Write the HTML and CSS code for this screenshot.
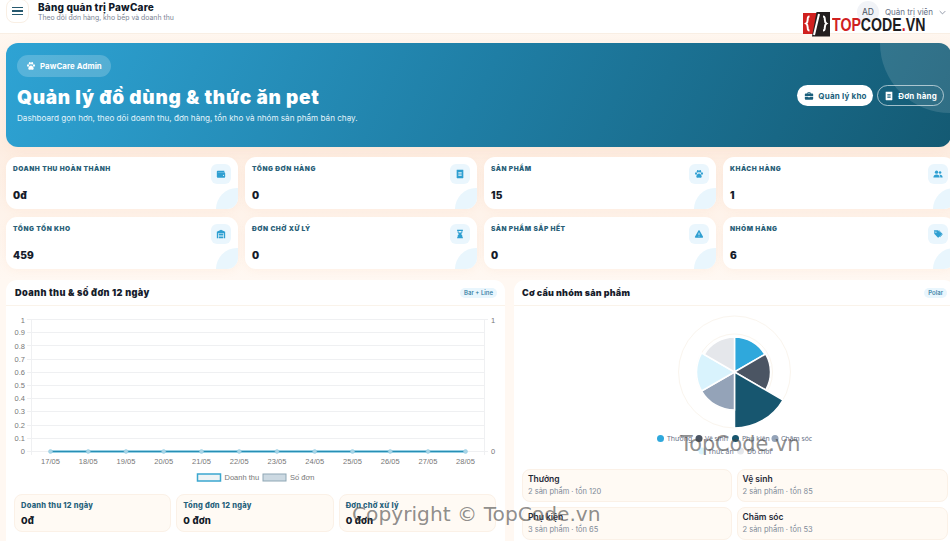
FILE: index.html
```html
<!DOCTYPE html>
<html lang="vi">
<head>
<meta charset="utf-8">
<title>PawCare</title>
<link rel="stylesheet" href="styles.css">
</head>
<body>
<svg class="defs" width="0" height="0" aria-hidden="true">
  <symbol id="i-paw" viewBox="0 0 24 24"><ellipse cx="5" cy="11" rx="2.4" ry="3"/><ellipse cx="9.3" cy="5.5" rx="2.5" ry="3.3"/><ellipse cx="14.7" cy="5.5" rx="2.5" ry="3.3"/><ellipse cx="19" cy="11" rx="2.4" ry="3"/><path d="M12 11c-3 0-6.500 4-6.500 7 0 2 1.500 3 3 3 1.300 0 2.300-.8 3.500-.8s2.200.8 3.500.8c1.500 0 3-1 3-3 0-3-3.500-7-6.500-7z"/></symbol>
  <symbol id="i-brief" viewBox="0 0 24 24"><path d="M8 6V4.500C8 3.700 8.700 3 9.500 3h5c.8 0 1.500.7 1.500 1.500V6h4c1.100 0 2 .9 2 2v4H2V8c0-1.100.9-2 2-2h4zm2 0h4V5h-4v1zM2 13.500h8V15h4v-1.500h8V19c0 1.100-.9 2-2 2H4c-1.100 0-2-.9-2-2v-5.500z"/></symbol>
  <symbol id="i-receipt" viewBox="0 0 24 24"><path fill-rule="evenodd" d="M5 2h14c.6 0 1 .4 1 1v18c0 .6-.4 1-1 1H5c-.6 0-1-.4-1-1V3c0-.6.400-1 1-1zm3 5v2h8V7H8zm0 4v2h8v-2H8zm0 4v2h8v-2H8z"/></symbol>
  <symbol id="i-wallet" viewBox="0 0 24 24"><path fill-rule="evenodd" d="M4 4h15c.6 0 1 .4 1 1v2H4.500c-.4 0-.5.500 0 .5H20c1.100 0 2 .9 2 2V19c0 1.100-.9 2-2 2H4c-1.100 0-2-.9-2-2V6c0-1.100.9-2 2-2zm14 9.500a1.500 1.500 0 100 3 1.500 1.500 0 000-3z"/></symbol>
  <symbol id="i-users" viewBox="0 0 24 24"><circle cx="8.500" cy="7.500" r="4"/><circle cx="17" cy="8.500" r="3"/><path d="M1 20c0-4.500 3-7 7.500-7s7.500 2.500 7.500 7v.5H1V20zM17.500 20.500V20c0-2.500-.9-4.600-2.500-6 .7-.3 1.400-.5 2.300-.5 3.500 0 5.700 2.200 5.700 6v1h-5.500z"/></symbol>
  <symbol id="i-store" viewBox="0 0 24 24"><path fill-rule="evenodd" d="M12 2l10 4.500V22h-3V10H5v12H2V6.500L12 2zM6.500 11.500h11v3h-11v-3zm0 4h11v2.500h-11v-2.500zm0 3.500h11v3h-11v-3z"/></symbol>
  <symbol id="i-hour" viewBox="0 0 24 24"><path d="M5 2h14v2.500h-1.300V7c0 2.200-1.700 3.900-3.500 5 1.800 1.100 3.500 2.800 3.500 5v2.500H19V22H5v-2.500h1.300V17c0-2.200 1.700-3.900 3.500-5-1.800-1.100-3.500-2.800-3.500-5V4.500H5V2zm3.500 2.500V7c0 .5.200 1 .4 1.500h6.200c.2-.5.400-1 .4-1.500V4.500h-7z"/></symbol>
  <symbol id="i-warn" viewBox="0 0 24 24"><path fill-rule="evenodd" d="M12 3c.6 0 1.100.3 1.400.8l8.400 15c.6 1-.1 2.200-1.400 2.200H3.600c-1.300 0-2-1.200-1.400-2.200l8.400-15c.3-.5.800-.8 1.400-.8zm-1 6v5.500h2V9h-2zm0 7v2h2v-2h-2z"/></symbol>
  <symbol id="i-tags" viewBox="0 0 24 24"><path fill-rule="evenodd" d="M2 4.500C2 3.700 2.700 3 3.500 3H11c.5 0 .9.200 1.200.5l8 8c.6.600.6 1.500 0 2.100l-6.600 6.600c-.6.600-1.500.6-2.100 0l-8-8c-.3-.3-.5-.7-.5-1.200V4.500zM7 6a1.500 1.500 0 100 3 1.500 1.500 0 000-3z"/><path d="M14.500 3l8 8.500c.7.700.7 1.700 0 2.400l-5.500 6-1-1 5-5.800-8-10.100h1.500z"/></symbol>
</svg>

<header class="topbar">
  <div class="brand">
    <button class="menu-btn" type="button" aria-label="Menu">
      <span class="menu-line"></span><span class="menu-line"></span><span class="menu-line"></span>
    </button>
    <div class="brand-text">
      <div class="brand-title">Bảng quản trị PawCare</div>
      <div class="brand-sub">Theo dõi đơn hàng, kho bếp và doanh thu</div>
    </div>
  </div>
  <div class="user">
    <span class="avatar">AD</span>
    <span class="user-name">Quản trị viên</span>
    <svg class="chev" viewBox="0 0 10 6"><path d="M1 1l4 4 4-4"/></svg>
  </div>
</header>

<div class="logo">
  <svg class="logo-mark" viewBox="0 0 27 25">
    <path class="lm-red" d="M0 1h17v21H0z"/>
    <path class="lm-black" d="M9 24.500L13.500 0H27v24.500z"/>
    <path class="lm-line" d="M6.500 4.500c-1.800 0-1.800 1-1.800 3s0 3-1.700 4c1.700 1 1.700 2 1.700 4s0 3 1.800 3M11 23L16 2M20 4.500c1.800 0 1.800 1 1.800 3s0 3 1.700 4c-1.700 1-1.700 2-1.700 4s0 3-1.800 3"/>
  </svg>
  <span class="logo-text"><span class="logo-red">TOP</span>CODE<span class="logo-red">.</span>VN</span>
</div>

<main class="main">
  <section class="hero">
    <div class="hero-circle"></div>
    <div class="hero-left">
      <span class="hero-chip"><svg class="ico-10"><use href="#i-paw"/></svg>PawCare Admin</span>
      <h1 class="hero-title">Quản lý đồ dùng &amp; thức ăn pet</h1>
      <p class="hero-sub">Dashboard gọn hơn, theo dõi doanh thu, đơn hàng, tồn kho và nhóm sản phẩm bán chạy.</p>
    </div>
    <div class="hero-actions">
      <a class="btn btn-solid"><svg class="ico-10"><use href="#i-brief"/></svg>Quản lý kho</a>
      <a class="btn btn-ghost"><svg class="ico-10"><use href="#i-receipt"/></svg>Đơn hàng</a>
    </div>
  </section>

  <section class="stats">
    <article class="stat"><div class="stat-label">Doanh thu hoàn thành</div><div class="stat-value">0đ</div><span class="stat-icon"><svg class="ico-10"><use href="#i-wallet"/></svg></span></article>
    <article class="stat"><div class="stat-label">Tổng đơn hàng</div><div class="stat-value">0</div><span class="stat-icon"><svg class="ico-10"><use href="#i-receipt"/></svg></span></article>
    <article class="stat"><div class="stat-label">Sản phẩm</div><div class="stat-value">15</div><span class="stat-icon"><svg class="ico-10"><use href="#i-paw"/></svg></span></article>
    <article class="stat"><div class="stat-label">Khách hàng</div><div class="stat-value">1</div><span class="stat-icon"><svg class="ico-10"><use href="#i-users"/></svg></span></article>
    <article class="stat"><div class="stat-label">Tổng tồn kho</div><div class="stat-value">459</div><span class="stat-icon"><svg class="ico-10"><use href="#i-store"/></svg></span></article>
    <article class="stat"><div class="stat-label">Đơn chờ xử lý</div><div class="stat-value">0</div><span class="stat-icon"><svg class="ico-10"><use href="#i-hour"/></svg></span></article>
    <article class="stat"><div class="stat-label">Sản phẩm sắp hết</div><div class="stat-value">0</div><span class="stat-icon"><svg class="ico-10"><use href="#i-warn"/></svg></span></article>
    <article class="stat"><div class="stat-label">Nhóm hàng</div><div class="stat-value">6</div><span class="stat-icon"><svg class="ico-10"><use href="#i-tags"/></svg></span></article>
  </section>

  <section class="panels">
    <article class="panel">
      <header class="panel-head"><h2 class="panel-title">Doanh thu &amp; số đơn 12 ngày</h2><span class="badge">Bar + Line</span></header>
      <svg class="chart" viewBox="6 306 499 184">
        <g class="grid">
          <path d="M27 319.500H484M27 332.500H484M27 345.500H484M27 359.500H484M27 372.500H484M27 385.500H484M27 398.500H484M27 411.500H484M27 425.500H484M27 438.500H484M27 451.500H484"/>
          <path d="M31.500 319V455M484.500 319V455M484 319.500H488M484 451.500H488"/>
        </g>
        <g class="tick tick-end">
          <text x="25" y="322.500">1</text><text x="25" y="335">0.9</text><text x="25" y="348.500">0.8</text><text x="25" y="361.500">0.7</text><text x="25" y="375">0.6</text><text x="25" y="388">0.5</text><text x="25" y="401">0.4</text><text x="25" y="414">0.3</text><text x="25" y="427.500">0.2</text><text x="25" y="441">0.1</text><text x="25" y="454">0</text>
        </g>
        <g class="tick"><text x="491" y="322.500">1</text><text x="491" y="454">0</text></g>
        <path class="line-glow" d="M50.500 451.500H465.500"/>
        <path class="line" d="M50.500 451.500H465.500"/>
        <g class="pts">
          <circle cx="50.500" cy="451.500" r="2"/><circle cx="88.200" cy="451.500" r="2"/><circle cx="126" cy="451.500" r="2"/><circle cx="163.700" cy="451.500" r="2"/><circle cx="201.500" cy="451.500" r="2"/><circle cx="239.200" cy="451.500" r="2"/><circle cx="277" cy="451.500" r="2"/><circle cx="314.700" cy="451.500" r="2"/><circle cx="352.500" cy="451.500" r="2"/><circle cx="390.200" cy="451.500" r="2"/><circle cx="428" cy="451.500" r="2"/><circle cx="465.500" cy="451.500" r="2"/>
        </g>
        <g class="tick tick-mid">
          <text x="50.500" y="464">17/05</text><text x="88.200" y="464">18/05</text><text x="126" y="464">19/05</text><text x="163.700" y="464">20/05</text><text x="201.500" y="464">21/05</text><text x="239.200" y="464">22/05</text><text x="277" y="464">23/05</text><text x="314.700" y="464">24/05</text><text x="352.500" y="464">25/05</text><text x="390.200" y="464">26/05</text><text x="428" y="464">27/05</text><text x="465.500" y="464">28/05</text>
        </g>
        <rect class="lg-a" x="197.500" y="474" width="23" height="7"/>
        <text class="tick" x="224.500" y="480">Doanh thu</text>
        <rect class="lg-b" x="263" y="474" width="23" height="7"/>
        <text class="tick" x="290" y="480">Số đơn</text>
      </svg>
      <div class="summary">
        <div class="sum-box"><div class="sum-label">Doanh thu 12 ngày</div><div class="sum-value">0đ</div></div>
        <div class="sum-box"><div class="sum-label">Tổng đơn 12 ngày</div><div class="sum-value">0 đơn</div></div>
        <div class="sum-box"><div class="sum-label">Đơn chờ xử lý</div><div class="sum-value">0 đơn</div></div>
      </div>
    </article>

    <article class="panel panel-pie">
      <header class="panel-head"><h2 class="panel-title">Cơ cấu nhóm sản phẩm</h2><span class="badge">Polar</span></header>
      <svg class="pie" viewBox="514 306 441 155">
        <g transform="translate(734.500 372)">
          <circle class="ring" r="56"/><circle class="ring" r="38"/>
          <path class="s s1" d="M0 0V-35A35 35 0 0 1 30.300 -17.500Z"/>
          <path class="s s2" d="M0 0L31.200 -18A36 36 0 0 1 31.200 18Z"/>
          <path class="s s3" d="M0 0L48.500 28A56 56 0 0 1 0 56Z"/>
          <path class="s s4" d="M0 0V38A38 38 0 0 1 -32.900 19Z"/>
          <path class="s s5" d="M0 0L-32.900 19A38 38 0 0 1 -32.900 -19Z"/>
          <path class="s s6" d="M0 0L-30.300 -17.500A35 35 0 0 1 0 -35Z"/>
        </g>
        <circle class="s1" cx="660.500" cy="438.500" r="3.500"/><text class="pl" x="667" y="441">Thưởng</text>
        <circle class="s2" cx="699" cy="438.500" r="3.500"/><text class="pl" x="705" y="441">Vệ sinh</text>
        <circle class="s3" cx="735.500" cy="438.500" r="3.500"/><text class="pl" x="742" y="441">Phụ kiện</text>
        <circle class="s4" cx="775" cy="438.500" r="3.500"/><text class="pl" x="781" y="441">Chăm sóc</text>
        <circle class="s5" cx="702" cy="451" r="3.500"/><text class="pl" x="708" y="453.500">Thức ăn</text>
        <circle class="s6" cx="740.500" cy="451" r="3.500"/><text class="pl" x="747" y="453.500">Đồ chơi</text>
      </svg>
      <div class="cats">
        <div class="cat"><div class="cat-name">Thưởng</div><div class="cat-sub">2 sản phẩm · tồn 120</div></div>
        <div class="cat"><div class="cat-name">Vệ sinh</div><div class="cat-sub">2 sản phẩm · tồn 85</div></div>
        <div class="cat"><div class="cat-name">Phụ kiện</div><div class="cat-sub">3 sản phẩm · tồn 65</div></div>
        <div class="cat"><div class="cat-name">Chăm sóc</div><div class="cat-sub">2 sản phẩm · tồn 53</div></div>
      </div>
    </article>
  </section>
</main>

<div class="wm wm-a">TopCode.vn</div>
<div class="wm wm-b">Copyright © TopCode.vn</div>
</body>
</html>
```
FILE: styles.css
```css
* { box-sizing: border-box; }
html, body { margin: 0; height: 541px; overflow: hidden; }
body {
  position: relative;
  width: 950px;
  font-family: Inter, "Liberation Sans", sans-serif;
  color: #111827;
  background: linear-gradient(180deg, #fff9f3 0, #fdeee3 150px, #fff8f2 280px, #fff8f2 100%);
}
.defs { position: absolute; }
svg { fill: currentColor; }

.topbar {
  height: 34px;
  display: flex;
  justify-content: space-between;
  background: #fff;
  border-bottom: 1px solid #f9efe4;
  padding: 0 4px 0 6px;
}
.brand { display: flex; gap: 9px; align-items: flex-start; }
.menu-btn {
  width: 23px; height: 24px; margin-top: -1px;
  padding: 0;
  display: flex; flex-direction: column; justify-content: center; align-items: center; gap: 2px;
  background: #fff; border: 1px solid #f9efe4; border-radius: 8px;
}
.menu-line { width: 11px; height: 1.500px; background: #26596f; }
.brand-text { padding-top: 1px; }
.brand-title { font-size: 10px; line-height: 12px; font-weight: 800; letter-spacing: .2px; color: #101828; }
.brand-sub { font-size: 6.900px; line-height: 10px; color: #7b8494; }
.user { display: flex; align-items: flex-start; font-size: 8px; color: #667085; }
.avatar {
  width: 22px; height: 22px; margin-top: 1px; border-radius: 50%;
  background: #f1f3f7; color: #4b5563; font-size: 8.500px; line-height: 22px; text-align: center;
}
.user-name { margin: 7px 0 0 6px; line-height: 10px; }
.chev { width: 7px; height: 5px; margin: 10px 0 0 6px; fill: none; stroke: #667085; stroke-width: 1; }

.logo { position: absolute; left: 803px; top: 12px; display: flex; align-items: center; gap: 2px; }
.logo-mark { width: 27px; height: 25px; display: block; }
.lm-red { fill: #d0201f; }
.lm-black { fill: #231f20; }
.lm-line { fill: none; stroke: #fff; stroke-width: 2; }
.logo-text {
  font-family: "Liberation Sans", sans-serif;
  font-size: 19px; line-height: 20px; font-weight: 700; color: #1d1d1f;
  display: inline-block;
  transform: scaleX(.745);
  transform-origin: left center;
}
.logo-red { color: #d0201f; }

.main { padding: 9px 0 0 6px; width: 955px; }

.hero {
  position: relative; overflow: hidden;
  width: 945px; height: 104px;
  padding: 12px 7px 0 11px;
  display: flex; justify-content: space-between; align-items: center;
  border-radius: 12px;
  background: linear-gradient(115deg, #2ea3d4 0%, #1f7ea5 50%, #145a73 100%);
  color: #fff;
  box-shadow: 0 4px 14px rgba(240, 170, 120, .12);
}
.hero-circle { position: absolute; right: -69px; top: -70px; width: 140px; height: 140px; border-radius: 50%; background: rgba(255, 255, 255, .12); }
.hero-left { position: relative; align-self: flex-start; }
.hero-chip {
  display: inline-flex; align-items: center; gap: 4px;
  height: 22px; padding: 0 9px;
  border-radius: 11px; background: rgba(255, 255, 255, .2);
  font-size: 7.800px; font-weight: 700; letter-spacing: .1px;
}
.ico-10 { width: 10px; height: 10px; display: block; }
.hero-title { margin: 9px 0 0; font-size: 19px; line-height: 24px; font-weight: 900; letter-spacing: .72px; }
.hero-sub { margin: 3px 0 0; font-size: 8.150px; line-height: 11px; color: #e2f3fa; }
.hero-actions { position: relative; display: flex; gap: 4px; margin-top: -11px; }
.btn {
  display: flex; align-items: center; gap: 4px;
  height: 21px;
  border-radius: 11px; font-size: 8px; font-weight: 700; letter-spacing: .2px;
}
.btn-solid { padding: 0 6.500px 0 7px; background: #fff; color: #1b5f7c; }
.btn-ghost { padding: 0 6px; border: 1px solid rgba(255, 255, 255, .6); color: #fff; }

.stats { display: grid; grid-template-columns: repeat(4, 232px); grid-auto-rows: 52px; gap: 8px 7px; margin-top: 10px; }
.stat {
  position: relative; overflow: hidden;
  background: #fff; border-radius: 11px; padding: 8px 7px;
  box-shadow: 0 2px 8px rgba(240, 170, 120, .08);
}
.stat::after { content: ""; position: absolute; right: -20px; bottom: -21px; width: 42px; height: 42px; border-radius: 50%; background: #e9f6fd; }
.stat-label { font-size: 6.600px; line-height: 9px; font-weight: 900; letter-spacing: .5px; text-transform: uppercase; color: #2a5f78; }
.stat-value { margin-top: 14px; font-size: 10px; line-height: 14px; font-weight: 900; letter-spacing: .2px; color: #161c2b; }
.stat-icon {
  position: absolute; right: 7px; top: 7px; width: 20px; height: 20px;
  display: flex; align-items: center; justify-content: center;
  border-radius: 6px; background: #eaf6fd; color: #2f9fd1;
}

.panels { display: grid; grid-template-columns: 499px 441px; gap: 9px; margin-top: 11px; }
.panel { height: 280px; background: #fff; border-radius: 11px 11px 0 0; }
.panel-head {
  height: 26px; padding: 0 8px 0 9px;
  display: flex; justify-content: space-between; align-items: center;
  border-bottom: 1px solid #faf3ea;
}
.panel-pie .panel-head { padding-left: 8px; }
.panel-title { margin: 0; font-size: 9.200px; font-weight: 900; letter-spacing: .38px; color: #161c2b; }
.panel-pie .panel-title { font-size: 9px; letter-spacing: .2px; }
.badge { padding: 1px 4px; border-radius: 6px; background: #e9f6fd; color: #27759b; font-size: 6px; line-height: 8px; font-weight: 500; }
.chart { display: block; width: 499px; height: 184px; }
.grid path { fill: none; stroke: #eff0f2; stroke-width: 1; }
.tick text, text.tick { font-family: "Liberation Sans", sans-serif; font-size: 7.500px; fill: #777; }
.tick-end text { text-anchor: end; }
.tick-mid text { text-anchor: middle; }
.line-glow { fill: none; stroke: #bfe6f5; stroke-width: 3; }
.line { fill: none; stroke: #278fb5; stroke-width: 1.500; }
.pts circle { fill: #a9d6e8; stroke: #90c8de; stroke-width: .5; }
.lg-a { fill: #eef3f5; stroke: #3ba7cf; stroke-width: 1.500; }
.lg-b { fill: #ccd9e2; stroke: #8fa7b5; stroke-width: 1; }

.summary { display: grid; grid-template-columns: repeat(3, 1fr); gap: 5px; padding: 4px 9px 0 8px; }
.sum-box { height: 38px; padding: 6px 6px; background: #fffaf4; border: 1px solid #fbf1e7; border-radius: 8px; }
.sum-label { font-size: 7.500px; line-height: 10px; font-weight: 800; letter-spacing: .25px; color: #26617b; }
.sum-value { margin-top: 4px; font-size: 9.500px; line-height: 12px; font-weight: 800; letter-spacing: .2px; color: #111827; }

.pie { display: block; width: 441px; height: 155px; }
.ring { fill: none; stroke: #faf5ee; stroke-width: 1; }
.s { stroke: #fff; stroke-width: 1.500; }
.s1 { fill: #2fa8dc; }
.s2 { fill: #4b5563; }
.s3 { fill: #17566f; }
.s4 { fill: #94a3b8; }
.s5 { fill: #d9f3fd; }
.s6 { fill: #e5e7eb; }
.pl { font-family: "Noto Sans", sans-serif; font-size: 6.800px; fill: #667085; }

.cats { display: grid; grid-template-columns: 209.500px 211px; gap: 4.500px 5px; padding: 8px 0 0 8px; }
.cat { height: 33px; padding: 4px 5px; background: #fffaf4; border: 1px solid #fbf1e7; border-radius: 8px; }
.cat-name { font-size: 8.500px; line-height: 11px; font-weight: 600; color: #1f2937; }
.cat-sub { margin-top: 2px; font-size: 7.500px; line-height: 10px; color: #808a98; }

.wm { position: absolute; font-family: "DejaVu Sans", sans-serif; color: rgba(70, 70, 70, .62); white-space: nowrap; }
.wm-a { left: 680px; top: 433px; font-size: 20.800px; line-height: 22px; }
.wm-b { left: 352px; top: 503px; font-size: 20.200px; line-height: 22px; }
```
